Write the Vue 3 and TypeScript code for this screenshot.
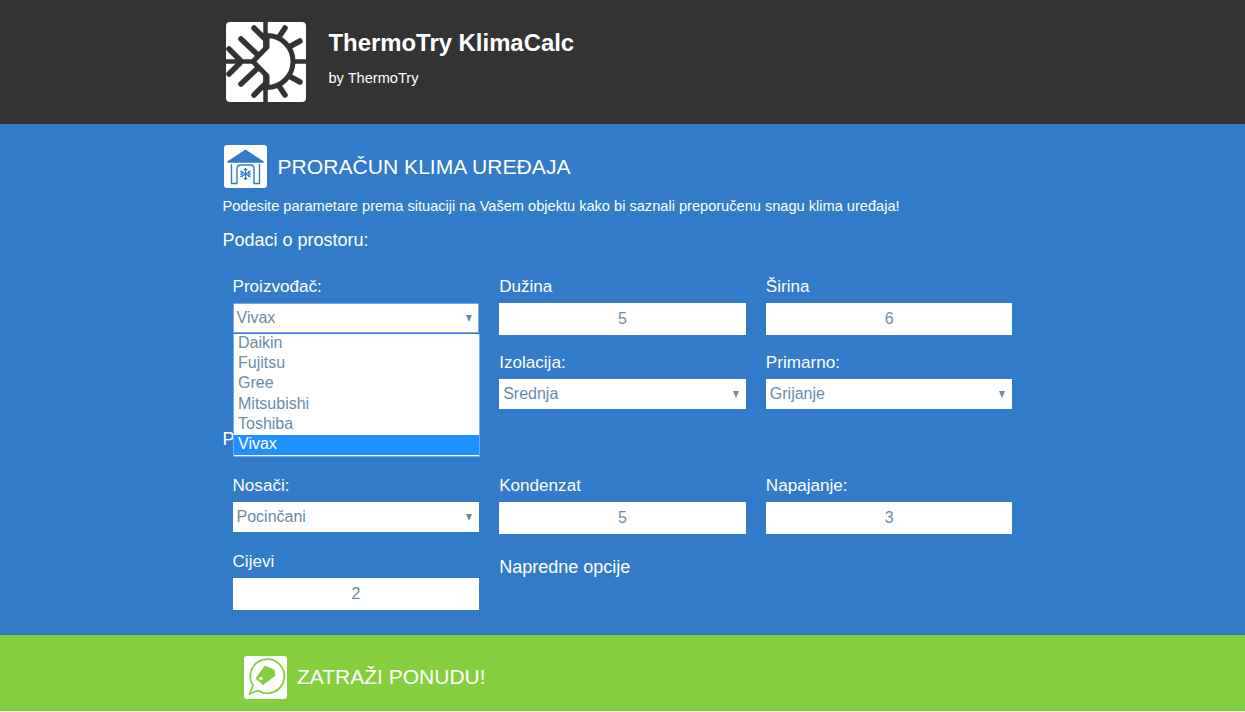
<template>
  <div class="page">
    <header class="top">
      <div class="wrap top-in">
        <svg class="logo" viewBox="0 0 80 80">
          <rect width="80" height="80" rx="4" fill="#fff" />
          <path d="M39.500 0V80M0 39.500H29M66 39.500H80" fill="none" stroke="#333" stroke-width="4.500" />
          <g fill="none" stroke="#333" stroke-width="5.500" stroke-linecap="round">
            <path d="M28 6L38 16M15 17L33 34M3 27L14 38M28 73L38 63M15 62L33 45M3 52L14 41" />
            <path d="M53 15L59 6M63 25L74 19M63 54L74 60M53 64L59 73" />
          </g>
          <path d="M41 13.500A26 26 0 0 1 41 65.500V54L27 39.500L41 25Z" fill="#fff" stroke="#333" stroke-width="5" stroke-linejoin="round" />
          <path d="M39.500 11V28M39.500 51V68" stroke="#333" stroke-width="4.500" />
        </svg>
        <div class="brand">
          <h1>ThermoTry KlimaCalc</h1>
          <p>by ThermoTry</p>
        </div>
      </div>
    </header>

    <main class="body">
      <div class="wrap">
        <div class="title">
          <svg class="tile" viewBox="0 0 43 43">
            <rect width="43" height="43" rx="3" fill="#fff" />
            <path d="M4 17L21.500 5.500L39 17Z" fill="#317bc8" stroke="#317bc8" stroke-width="1.500" stroke-linejoin="round" />
            <path d="M7.500 19V38.500H13V23.500Q13 20 16.500 20H26.500Q30 20 30 23.500V38.500H35.500V19" fill="none" stroke="#317bc8" stroke-width="1.400" />
            <g stroke="#317bc8" stroke-width="1.200" fill="none">
              <path d="M21.500 23V35M16.300 26L26.700 32M26.700 26L16.300 32" />
              <path d="M19.800 24L21.500 25.500L23.200 24M19.800 34L21.500 32.500L23.200 34M16.500 28.500L18.500 28L17.900 26M25 26L24.500 28L26.500 28.500M16.500 29.500L18.500 30L17.900 32M25 32L24.500 30L26.500 29.500" />
            </g>
          </svg>
          <h2>PRORAČUN KLIMA UREĐAJA</h2>
        </div>
        <p class="lead">Podesite parametare prema situaciji na Vašem objektu kako bi saznali preporučenu snagu klima uređaja!</p>

        <h3>Podaci o prostoru:</h3>
        <div class="grid first">
          <div class="field picker">
            <label>Proizvođač:</label>
            <div class="sel open" @click="open = !open">{{ brand }}</div>
            <ul v-if="open" class="list">
              <li v-for="b in brands" :key="b" :class="{ on: b === brand }" @click="pick(b)">{{ b }}</li>
            </ul>
          </div>
          <div class="field"><label>Dužina</label><input class="num" value="5" /></div>
          <div class="field"><label>Širina</label><input class="num" value="6" /></div>
          <div class="field"><label>Tip:</label><div class="sel">Zid</div></div>
          <div class="field"><label>Izolacija:</label><div class="sel">Srednja</div></div>
          <div class="field"><label>Primarno:</label><div class="sel">Grijanje</div></div>
        </div>

        <h3 class="second">Podaci o instalaciji:</h3>
        <div class="grid">
          <div class="field"><label>Nosači:</label><div class="sel">Pocinčani</div></div>
          <div class="field"><label>Kondenzat</label><input class="num" value="5" /></div>
          <div class="field"><label>Napajanje:</label><input class="num" value="3" /></div>
          <div class="field"><label>Cijevi</label><input class="num" value="2" /></div>
          <div class="more">Napredne opcije</div>
        </div>
      </div>
    </main>

    <footer class="cta">
      <div class="wrap cta-in">
        <svg class="tile" viewBox="0 0 43 43">
          <rect width="43" height="43" rx="3" fill="#fff" />
          <path d="M5.500 38L9 29.500A17 17 0 1 1 14 34.500Z" fill="none" stroke="#85cf3e" stroke-width="1.800" stroke-linejoin="round" />
          <path d="M12 22.500L21 10L30 14L31 19.500L19 28.500Z" fill="#85cf3e" stroke="#85cf3e" stroke-linejoin="round" />
          <circle cx="17" cy="22.500" r="1.700" fill="#fff" />
        </svg>
        <span>ZATRAŽI PONUDU!</span>
      </div>
    </footer>
  </div>
</template>

<script setup lang="ts">
import { ref } from 'vue'

const brands = ['Daikin', 'Fujitsu', 'Gree', 'Mitsubishi', 'Toshiba', 'Vivax']
const brand = ref<string>('Vivax')
const open = ref<boolean>(true)

const pick = (b: string) => {
  brand.value = b
  open.value = false
}
</script>

<style>
html, body {
  background: #fff;
}
</style>

<style scoped>
.page {
  font-family: "Liberation Sans", Arial, sans-serif;
  color: #fff;
}
.wrap {
  width: 800px;
  margin: 0 auto;
}
.top {
  background: #333;
  height: 124px;
}
.top-in {
  display: flex;
  align-items: flex-start;
  padding-top: 22px;
}
.logo {
  width: 80px;
  height: 80px;
  margin-left: 3px;
}
.brand {
  margin-left: 23px;
}
h1 {
  margin: 7px 0 0;
  font-size: 23.900px;
  line-height: 28px;
  font-weight: bold;
}
.brand p {
  margin: 12px 0 0;
  font-size: 14.600px;
  line-height: 18px;
}
.body {
  background: #317bc8;
  height: 511px;
  overflow: hidden;
}
.title {
  display: flex;
  align-items: center;
  padding: 21px 0 0 1px;
}
.tile {
  width: 43px;
  height: 43px;
  flex: none;
}
h2 {
  margin: 0 0 0 11px;
  font-size: 21.100px;
  font-weight: normal;
}
.lead {
  margin: 8px 0 0;
  font-size: 14.600px;
  line-height: 20px;
}
h3 {
  margin: 14px 0 0;
  font-size: 18px;
  line-height: 20px;
  font-weight: normal;
}
h3.second {
  margin-top: 16px;
}
.grid {
  display: grid;
  grid-template-columns: repeat(3, 1fr);
  row-gap: 16px;
  margin-top: 27px;
}
.field {
  padding: 0 10px;
  position: relative;
  min-height: 60px;
}
label {
  display: block;
  font-size: 17.100px;
  line-height: 20px;
  margin-bottom: 6px;
}
.sel {
  position: relative;
  height: 30px;
  line-height: 30px;
  padding-left: 4px;
  background: #fff;
  color: #6a8ca6;
  font-size: 16px;
  cursor: pointer;
}
.sel::after {
  content: "";
  position: absolute;
  right: 7px;
  top: 12px;
  border: 3.500px solid transparent;
  border-top: 7px solid #6a8ca6;
  border-bottom: 0;
}
.sel.open {
  outline: 1px solid #78a8ef;
  outline-offset: -1px;
}
.num {
  display: block;
  box-sizing: border-box;
  width: 100%;
  height: 32px;
  border: 0;
  padding: 0;
  background: #fff;
  color: #6a8ca6;
  font: 16px "Liberation Sans", Arial, sans-serif;
  text-align: center;
}
.list {
  position: absolute;
  z-index: 2;
  left: 10px;
  right: 9.500px;
  top: 57px;
  margin: 0;
  padding: 0 0 1px;
  list-style: none;
  background: #fff;
  border: 1px solid #78a8ef;
  border-top: 0;
  color: #6a8ca6;
  font-size: 16px;
}
.list li {
  height: 20.200px;
  line-height: 17px;
  padding-left: 4.500px;
  cursor: pointer;
}
.list li.on {
  background: #1e90ff;
  color: #fff;
}
.more {
  padding: 0 10px;
  font-size: 18px;
  line-height: 20px;
  margin-top: 5px;
}
.cta {
  background: #85cf3e;
  height: 76px;
}
.cta-in {
  display: flex;
  align-items: center;
  height: 100%;
  padding-left: 21px;
  box-sizing: border-box;
}
.cta-in .tile {
  margin-top: 9px;
}
.cta-in span {
  margin-left: 10.500px;
  margin-top: 8px;
  font-size: 21px;
}
</style>
